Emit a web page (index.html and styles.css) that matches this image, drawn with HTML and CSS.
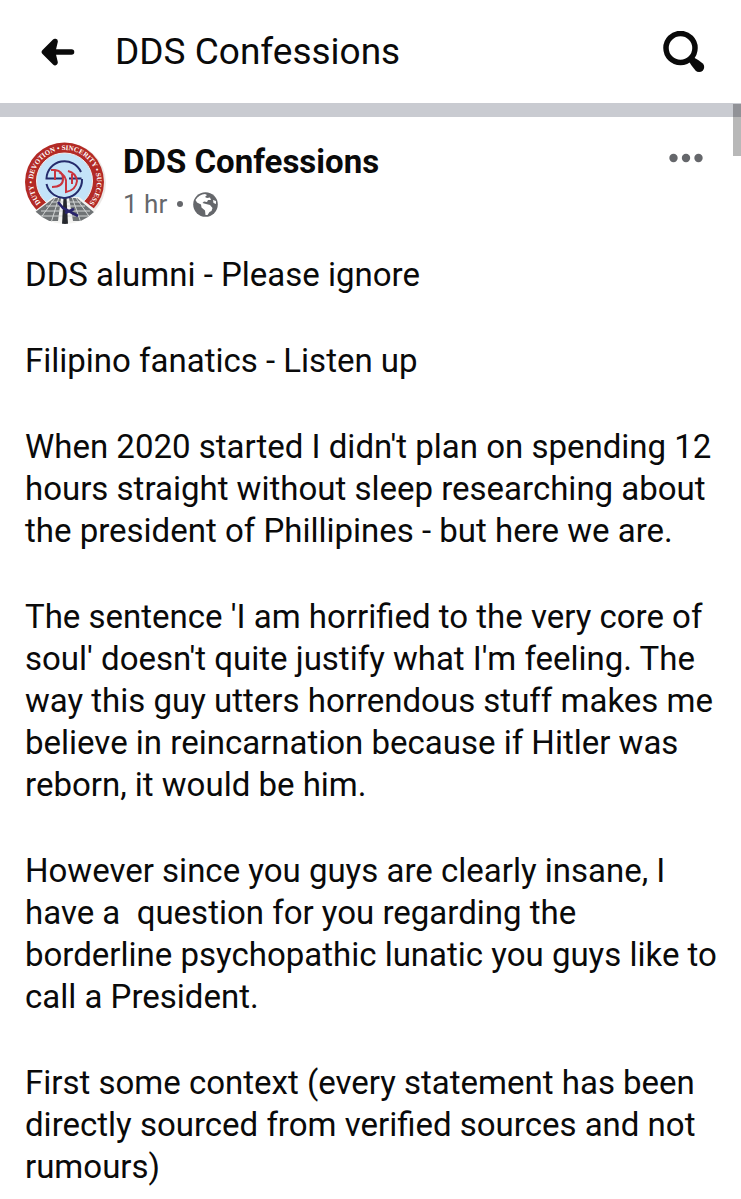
FILE: index.html
```html
<!DOCTYPE html>
<html lang="en">
<head>
<meta charset="utf-8">
<meta name="viewport" content="width=device-width, initial-scale=1">
<title>DDS Confessions</title>
<link rel="stylesheet" href="styles.css">
</head>
<body>
<header class="topbar">
  <button class="icon-button" type="button" aria-label="Back">
    <svg width="34" height="28" viewBox="0 0 34 28" aria-hidden="true">
      <path d="M14 3.500 L3.500 14 L14 24.500 L11.500 14 Z M6 14 H30.500" fill="#0a0a0a" stroke="#0a0a0a" stroke-width="5.600" stroke-linecap="round" stroke-linejoin="round"/>
    </svg>
  </button>
  <h1 class="title">DDS Confessions</h1>
  <button class="icon-button" type="button" aria-label="Search">
    <svg width="42" height="42" viewBox="0 0 42 42" aria-hidden="true">
      <circle cx="17.500" cy="17" r="14.500" fill="none" stroke="#0a0a0a" stroke-width="5.500"/>
      <path d="M26 30 Q27 33 32.500 39.500 A5 5 0 0 0 39.800 32.500 Q35 28.500 30 26 Z" fill="#0a0a0a"/>
    </svg>
  </button>
</header>
<main class="feed">
  <div class="scroll-thumb"></div>
  <article class="post">
    <div class="post-head">
      <svg class="avatar" width="82" height="84" viewBox="0 0 82 84" role="img" aria-label="DDS Confessions logo">
        <defs>
          <clipPath id="disc"><circle cx="40" cy="42" r="41"/></clipPath>
          <path id="ring" d="M17.400 63.600 A32 32 0 1 1 62.600 63.600"/>
        </defs>
        <circle cx="41" cy="42" r="40" fill="#ebe8e6"/>
        <circle cx="39.500" cy="41" r="39.500" fill="#b32a25"/>
        <circle cx="39.500" cy="40" r="28" fill="#c3e3f8" stroke="#f2eeee" stroke-width="1"/>
        <g clip-path="url(#disc)">
          <path d="M28 56 H54 L80 76 L60 90 H20 L2 76 Z" fill="#f3f3f1"/>
          <path d="M29 57 H36 L33 80 H20 L9 72 Z M44 57 H52 L70 72 L60 80 H48 Z" fill="#6f7375"/>
          <path d="M26 61 H56 M21 65 H60 M16 70 H65 M12 75 H70 M34 56 L26 82 M30 57 L15 78 M47 56 L56 82 M51 57 L66 78" fill="none" stroke="#d2d5d5" stroke-width="1"/>
          <path d="M38.500 57 H41.500 L43 83 H37 Z" fill="#25272d"/>
          <path d="M33 61 L38 67 L53 75 M40 72 L49 68" fill="none" stroke="#28246c" stroke-width="2.600"/>
        </g>
        <g fill="none" stroke-width="2">
          <path d="M56 31 A18 18 0 0 0 21.500 37.500 H38 M56.500 37.500 H44 M21.500 43 A18 18 0 0 0 57 38" stroke="#252c6c"/>
          <path d="M26 29 H30 Q38 30 38 38 Q38 46 27 46 M30 30 V39 M34 31 Q42 35 41 43 V51 Q51 49 52 40 Q51 32 43 30 M47 33 V43" stroke="#c9343e"/>
        </g>
        <text class="ring-text"><textPath href="#ring" startOffset="50%">DUTY • DEVOTION • SINCERITY • SUCCESS</textPath></text>
      </svg>
      <div class="byline">
        <h2 class="author">DDS Confessions</h2>
        <p class="meta">
          <span>1 hr</span><span class="dot"></span>
          <svg width="25" height="25" viewBox="0 0 25 25" role="img" aria-label="Public">
            <circle cx="12.500" cy="12.500" r="12.300" fill="#65676b"/>
            <path d="M2.500 8 Q6 2.500 12 2 L14 3 L12 5 L14 6 L17 5.500 L18 8 L15 8 L14 10 L11 9.500 L9.500 11 L13 12 L17 13 L19.500 16 L18.500 19 L16.500 20 L14.500 23 L12.500 23 L12 18.500 L8.500 15.500 L8 12.500 L4 10.500 Z M20 8 L23 9 V12 L20.500 11 Z" fill="#fff"/>
          </svg>
        </p>
      </div>
      <button class="more" type="button" aria-label="More options">
        <svg width="34" height="10" viewBox="0 0 34 10" aria-hidden="true" fill="#65676b">
          <circle cx="4.500" cy="5" r="4.200"/><circle cx="17" cy="5" r="4.200"/><circle cx="29.500" cy="5" r="4.200"/>
        </svg>
      </button>
    </div>
    <div class="post-text">
      <p>DDS alumni - Please ignore</p>
      <p>Filipino fanatics - Listen up</p>
      <p>When 2020 started I didn't plan on spending 12 hours straight without sleep researching about the president of Phillipines - but here we are.</p>
      <p>The sentence 'I am horrified to the very core of soul' doesn't quite justify what I'm feeling. The way this guy utters horrendous stuff makes me believe in reincarnation because if Hitler was reborn, it would be him.</p>
      <p>However since you guys are clearly insane, I have a&nbsp; question for you regarding the borderline psychopathic lunatic you guys like to call a President.</p>
      <p>First some context (every statement has been directly sourced from verified sources and not rumours)</p>
    </div>
  </article>
</main>
</body>
</html>
```
FILE: styles.css
```css
* {
  box-sizing: border-box;
}

body {
  margin: 0;
  background: #fff;
  color: #0a0a0a;
  font-family: Roboto, "Liberation Sans", sans-serif;
}

h1, h2, p {
  margin: 0;
}

button {
  display: flex;
  padding: 0;
  border: 0;
  background: none;
}

.topbar {
  display: flex;
  align-items: center;
  padding: 24px 36px 24px 41px;
  min-height: 103px;
}

.title {
  flex: 1;
  margin-left: 40px;
  font-size: 37px;
  line-height: 54px;
  font-weight: 400;
}

.feed {
  position: relative;
  border-top: 14px solid #c9cbd1;
}

.scroll-thumb {
  position: absolute;
  top: -13px;
  right: 0;
  width: 8px;
  height: 52px;
  background: rgba(0, 0, 0, 0.28);
}

.post {
  padding: 24px 24px 8px 25px;
}

.post-head {
  display: flex;
  align-items: flex-start;
}

.ring-text {
  fill: #fff;
  font-size: 7px;
  font-weight: 700;
  font-family: "Liberation Serif", serif;
  text-anchor: middle;
}

.byline {
  flex: 1;
  margin-left: 16px;
}

.author {
  font-size: 33px;
  line-height: 42px;
  font-weight: 700;
}

.meta {
  display: flex;
  align-items: center;
  gap: 10px;
  color: #65676b;
  font-size: 26px;
  line-height: 42px;
}

.dot {
  width: 6px;
  height: 6px;
  border-radius: 50%;
  background: #65676b;
}

.more {
  margin: 12px 14px 0 0;
}

.post-text {
  display: flex;
  flex-direction: column;
  gap: 44px;
  margin-top: 29px;
  font-size: 33px;
  line-height: 42px;
}
```
